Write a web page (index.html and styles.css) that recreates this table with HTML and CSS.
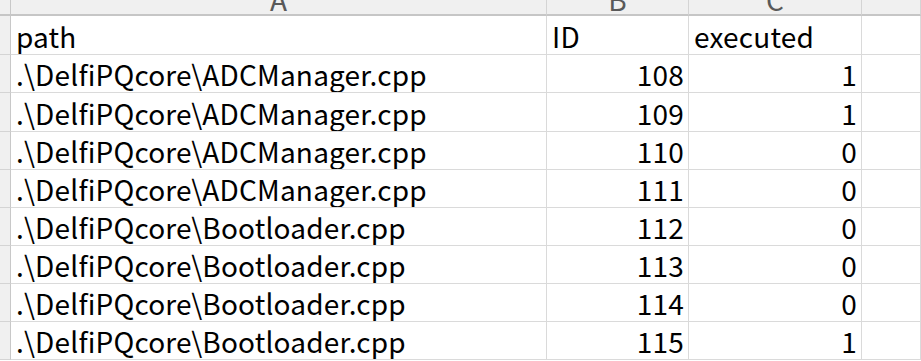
FILE: index.html
```html
<!DOCTYPE html>
<html lang="en">
<head>
<meta charset="utf-8">
<title>Sheet</title>
<link rel="stylesheet" href="styles.css">
</head>
<body>
<div class="sheet">
  <div class="corner"></div>
  <div class="colhead">A</div>
  <div class="colhead">B</div>
  <div class="colhead">C</div>
  <div class="colhead"></div>

  <div class="rowhead"></div>
  <div class="cell">path</div>
  <div class="cell">ID</div>
  <div class="cell">executed</div>
  <div class="cell"></div>

  <div class="rowhead"></div>
  <div class="cell">.\DelfiPQcore\ADCManager.cpp</div>
  <div class="cell num">108</div>
  <div class="cell num">1</div>
  <div class="cell"></div>

  <div class="rowhead"></div>
  <div class="cell">.\DelfiPQcore\ADCManager.cpp</div>
  <div class="cell num">109</div>
  <div class="cell num">1</div>
  <div class="cell"></div>

  <div class="rowhead"></div>
  <div class="cell">.\DelfiPQcore\ADCManager.cpp</div>
  <div class="cell num">110</div>
  <div class="cell num">0</div>
  <div class="cell"></div>

  <div class="rowhead"></div>
  <div class="cell">.\DelfiPQcore\ADCManager.cpp</div>
  <div class="cell num">111</div>
  <div class="cell num">0</div>
  <div class="cell"></div>

  <div class="rowhead"></div>
  <div class="cell">.\DelfiPQcore\Bootloader.cpp</div>
  <div class="cell num">112</div>
  <div class="cell num">0</div>
  <div class="cell"></div>

  <div class="rowhead"></div>
  <div class="cell">.\DelfiPQcore\Bootloader.cpp</div>
  <div class="cell num">113</div>
  <div class="cell num">0</div>
  <div class="cell"></div>

  <div class="rowhead"></div>
  <div class="cell">.\DelfiPQcore\Bootloader.cpp</div>
  <div class="cell num">114</div>
  <div class="cell num">0</div>
  <div class="cell"></div>

  <div class="rowhead"></div>
  <div class="cell">.\DelfiPQcore\Bootloader.cpp</div>
  <div class="cell num">115</div>
  <div class="cell num">1</div>
  <div class="cell"></div>
</div>
</body>
</html>
```
FILE: styles.css
```css
html, body {
  margin: 0;
  padding: 0;
  background: #ffffff;
  overflow: hidden;
}

.sheet {
  display: grid;
  grid-template-columns: 11px 536px 142px 173px 1fr;
  grid-template-rows: 16px 39px 38px 39px repeat(6, 38px);
  width: 921px;
  height: 361px;
  overflow: hidden;
  font-family: "Noto Sans CJK SC", "Noto Sans", sans-serif;
  font-size: 28px;
  letter-spacing: 0.18px;
  color: #000000;
}

.sheet > div {
  box-sizing: border-box;
  display: flex;
  align-items: flex-end;
  overflow: hidden;
  white-space: nowrap;
  line-height: 28px;
}

.corner {
  background: #f0f0f0;
  border-right: 1px solid #c8c8c8;
  border-bottom: 2px solid #c6c6c6;
}

.colhead {
  background: #f0f0f0;
  color: #595959;
  justify-content: center;
  border-right: 1px solid #d4d4d4;
  border-bottom: 2px solid #c6c6c6;
  padding-bottom: 1px;
}

.rowhead {
  background: #f0f0f0;
  border-right: 1px solid #c8c8c8;
  border-bottom: 1px solid #d4d4d4;
}

.cell {
  border-right: 1px solid #dadada;
  border-bottom: 1px solid #dadada;
  padding: 0 4px 4px 5px;
}

.num {
  justify-content: flex-end;
}
```
